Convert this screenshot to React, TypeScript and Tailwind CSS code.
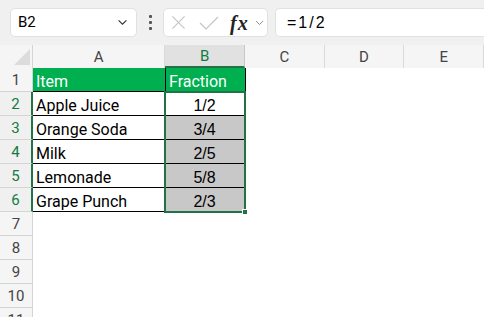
import React from "react";

const items = [
  ["Apple Juice", "1/2"],
  ["Orange Soda", "3/4"],
  ["Milk", "2/5"],
  ["Lemonade", "5/8"],
  ["Grape Punch", "2/3"],
];

function Chevron({ className }: { className?: string }) {
  return (
    <svg viewBox="0 0 12 8" className={className} fill="none" stroke="currentColor" strokeWidth="1.3">
      <path d="M1.5 1.5 L6 6 L10.5 1.5" />
    </svg>
  );
}

export default function App() {
  const rowHead = "w-[33px] shrink-0 flex items-center justify-center pt-[1px] border-b border-r border-[#d4d4d4] bg-[#f5f5f5] text-[15px] text-[#444]";
  const colHead = "flex items-center justify-center pt-[1px] border-r border-[#dadada] bg-[#f5f5f5] text-[15px] text-[#444]";
  const cellText = "text-[16px] leading-none flex items-end pb-[1px]";
  return (
    <div className="w-[484px] h-[317px] overflow-hidden bg-white" style={{ fontFamily: "Roboto, 'Liberation Sans', sans-serif" }}>
      {/* toolbar */}
      <div className="h-[45px] bg-[#f0f0f0] flex items-center pl-[10px]">
        <div className="w-[127px] h-[29px] bg-white border border-[#e1e1e1] rounded-[5px] flex items-center justify-between pl-[7px] pr-[8px]">
          <span className="text-[15px] text-black">B2</span>
          <Chevron className="w-[11px] h-[7px] text-[#333]" />
        </div>
        <div className="w-[26px] flex flex-col items-center gap-[3px]">
          <span className="w-[3px] h-[3px] bg-[#555] rounded-[1px]" />
          <span className="w-[3px] h-[3px] bg-[#555] rounded-[1px]" />
          <span className="w-[3px] h-[3px] bg-[#555] rounded-[1px]" />
        </div>
        <div className="w-[105px] h-[29px] bg-white border border-[#e1e1e1] rounded-[5px] flex items-center pl-[7px]">
          <svg viewBox="0 0 16 16" className="w-[15px] h-[15px]" fill="none" stroke="#c4c4c4" strokeWidth="1.2">
            <path d="M1.5 1.5 L14.5 14.5 M14.5 1.5 L1.5 14.5" />
          </svg>
          <svg viewBox="0 0 20 14" className="w-[20px] h-[14px] ml-[13px]" fill="none" stroke="#c4c4c4" strokeWidth="1.2">
            <path d="M1 7 L7 13 L19 1" />
          </svg>
          <span className="ml-[11px] text-[20px] italic font-bold text-[#222] leading-none tracking-[1px]" style={{ fontFamily: "'Liberation Serif', serif" }}>fx</span>
          <Chevron className="ml-[6px] w-[9px] h-[6px] text-[#888]" />
        </div>
        <div className="ml-[7px] flex-1 h-[29px] bg-white border border-[#e1e1e1] rounded-l-[5px] border-r-0 flex items-center pl-[11px]">
          <span className="text-[16px] text-black tracking-[2px]" style={{ fontFamily: "'Liberation Sans', sans-serif" }}>=1/2</span>
        </div>
      </div>

      {/* header row */}
      <div className="flex h-[23px]">
        <div className="relative w-[33px] shrink-0 bg-[#f5f5f5] border-r border-[#d4d4d4]">
          <svg viewBox="0 0 16 16" className="absolute right-[2px] bottom-[3px] w-[16px] h-[16px]">
            <path d="M16 0 L16 16 L0 16 Z" fill="#dcdcdc" />
          </svg>
        </div>
        <div className={`${colHead} w-[133px]`}>A</div>
        <div className="w-[80px] flex items-center justify-center pt-[1px] border-r border-[#c8c8c8] bg-[#e1e1e1] text-[15px] text-[#107c41] border-b-2 border-b-[#217346]">B</div>
        <div className={`${colHead} w-[80px]`}>C</div>
        <div className={`${colHead} w-[80px]`}>D</div>
        <div className={`${colHead} w-[80px]`}>E</div>
      </div>

      {/* row 1 */}
      <div className="flex h-[24px]">
        <div className={rowHead}>1</div>
        <div className={`w-[133px] bg-[#00b050] text-white ${cellText} pl-[3px] border-r border-b border-black`}>Item</div>
        <div className={`w-[80px] bg-[#00b050] text-white ${cellText} pl-[3px] border-r border-b border-black`}>Fraction</div>
      </div>

      {items.map(([name, frac], i) => (
        <div key={name} className="flex h-[24px]">
          <div className="w-[33px] shrink-0 flex items-center justify-center pt-[1px] border-b border-[#d4d4d4] border-r-2 border-r-[#217346] bg-[#f0f0f0] text-[15px] text-[#107c41]">{i + 2}</div>
          <div className={`w-[132px] bg-white text-black ${cellText} pl-[3px] border-b border-r border-black`}>{name}</div>
          <div
            className={`relative w-[80px] ${i === 0 ? "bg-white" : "bg-[#c8c8c8]"} text-black ${cellText} justify-center border-b border-r border-black`}
            style={{ fontFamily: "'Liberation Sans', sans-serif" }}
          >
            {frac}
            {i === 0 && (
              <div className="absolute z-10 -left-[1px] -top-[1px] w-[82px] h-[122px] border-2 border-[#217346] pointer-events-none">
                <span className="absolute -right-[4px] -bottom-[4px] w-[6px] h-[6px] bg-[#217346] border border-white" />
              </div>
            )}
          </div>
        </div>
      ))}

      {[7, 8, 9, 10, 11].map((n) => (
        <div key={n} className="flex h-[24px]">
          <div className={rowHead}>{n}</div>
        </div>
      ))}
    </div>
  );
}
